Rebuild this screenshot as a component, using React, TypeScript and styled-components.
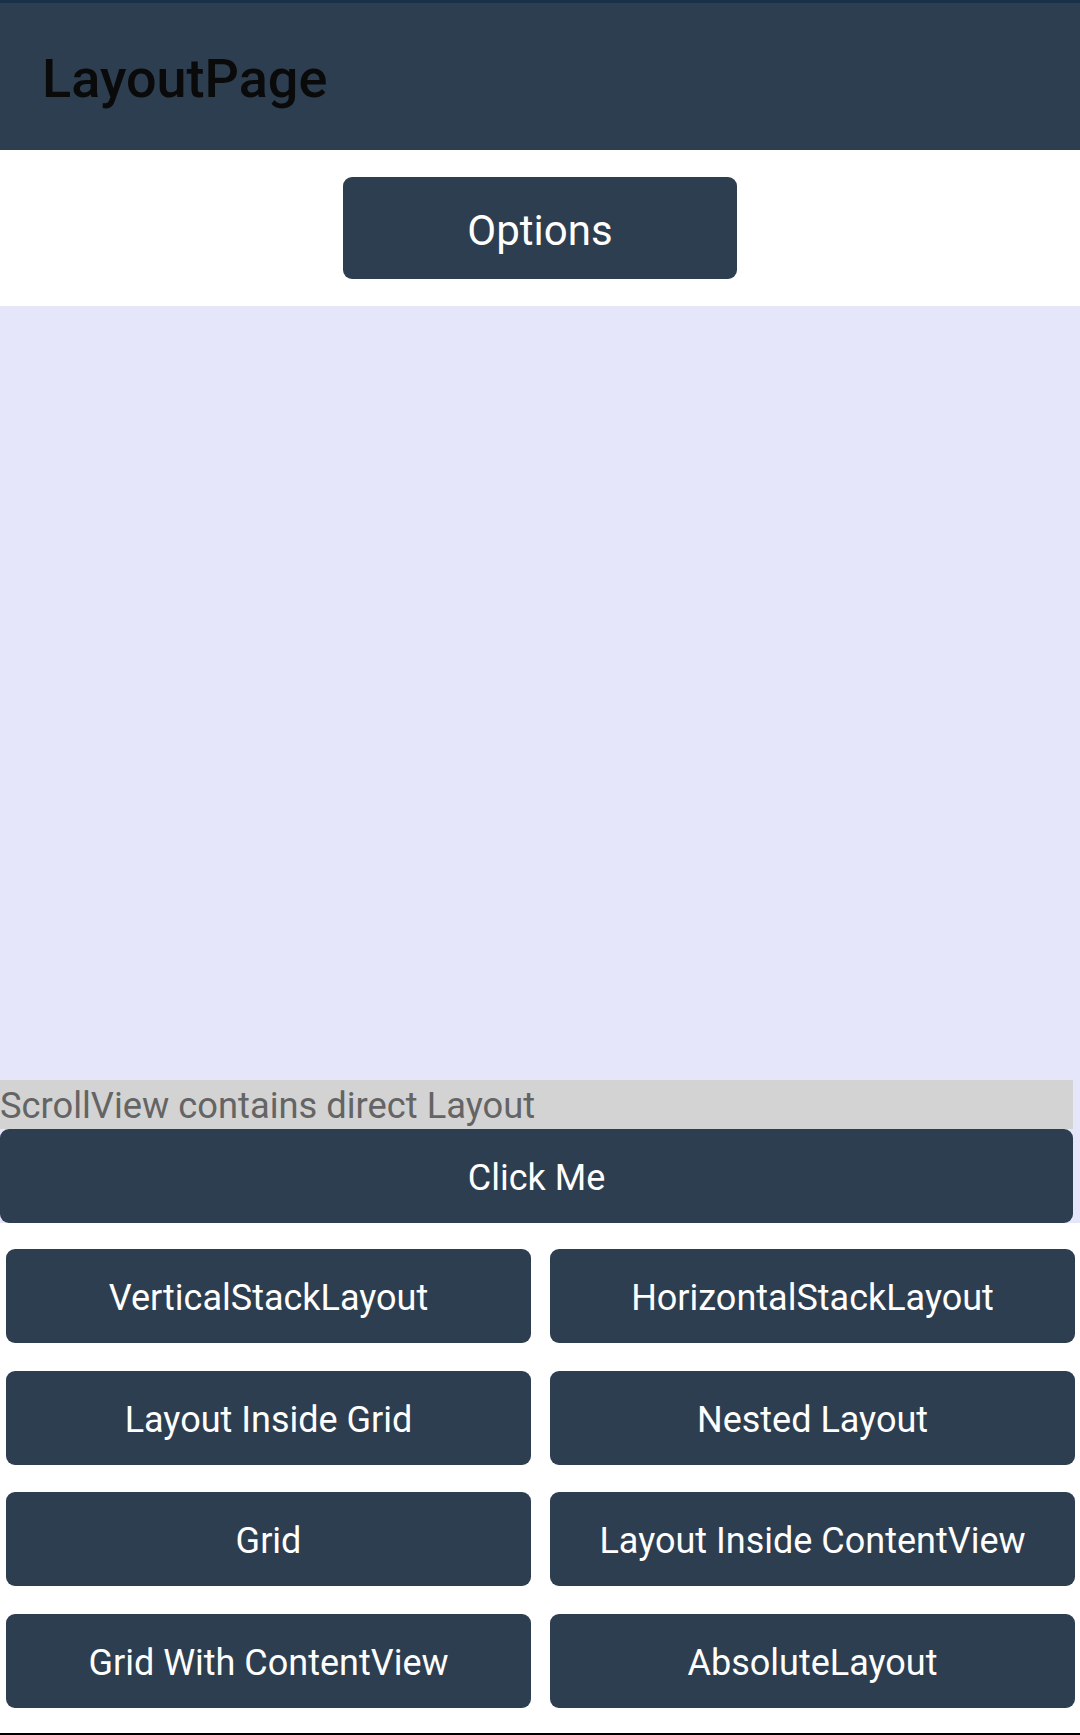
import styled, { createGlobalStyle } from "styled-components";

const GlobalStyle = createGlobalStyle`
  html, body {
    margin: 0;
    padding: 0;
    background: #ffffff;
  }
  body {
    font-family: Roboto, "Liberation Sans", sans-serif;
  }
`;

const Page = styled.div`
  width: 1080px;
  height: 1735px;
  display: flex;
  flex-direction: column;
  border-top: 3px solid #1b3049;
  border-bottom: 2px solid #000000;
  box-sizing: border-box;
  background: #ffffff;
`;

const Toolbar = styled.div`
  height: 147px;
  background: #2d3e50;
  display: flex;
  align-items: center;
  padding: 4px 0 0 42px;
  box-sizing: border-box;
`;

const Title = styled.h1`
  margin: 0;
  font-family: Roboto, sans-serif;
  font-weight: 500;
  font-size: 54px;
  color: #0a0a0a;
`;

const OptionsRow = styled.div`
  height: 156px;
  display: flex;
  justify-content: center;
  align-items: center;
`;

const Button = styled.button<{ $width?: string; $height?: number; $size?: number }>`
  width: ${(p) => p.$width || "100%"};
  height: ${(p) => p.$height || 94}px;
  border: none;
  border-radius: 9px;
  background: #2d3e50;
  color: #ffffff;
  font-family: Roboto, sans-serif;
  font-size: ${(p) => p.$size || 36}px;
  font-weight: 400;
  padding: 4px 0 0;
  cursor: pointer;
`;

const ScrollArea = styled.div`
  height: 917px;
  background: #e6e6fa;
  display: flex;
  flex-direction: column;
  justify-content: flex-end;
`;

const Inner = styled.div`
  width: 1073px;
  display: flex;
  flex-direction: column;
`;

const Label = styled.div`
  height: 49px;
  background: #d3d3d3;
  color: #646464;
  font-family: Roboto, sans-serif;
  font-size: 36.3px;
  line-height: 52px;
  white-space: nowrap;
  overflow: hidden;
`;

const ButtonGrid = styled.div`
  display: grid;
  grid-template-columns: 525px 525px;
  column-gap: 19px;
  row-gap: 27.5px;
  padding: 26px 5px 0 6px;
`;

const items = [
  "VerticalStackLayout",
  "HorizontalStackLayout",
  "Layout Inside Grid",
  "Nested Layout",
  "Grid",
  "Layout Inside ContentView",
  "Grid With ContentView",
  "AbsoluteLayout",
];

const App = () => {
  return (
    <>
      <GlobalStyle />
      <Page>
        <Toolbar>
          <Title>LayoutPage</Title>
        </Toolbar>
        <OptionsRow>
          <Button $width="394px" $height={102} $size={42}>Options</Button>
        </OptionsRow>
        <ScrollArea>
          <Inner>
            <Label>ScrollView contains direct Layout</Label>
            <Button>Click Me</Button>
          </Inner>
        </ScrollArea>
        <ButtonGrid>
          {items.map((item) => (
            <Button key={item}>{item}</Button>
          ))}
        </ButtonGrid>
      </Page>
    </>
  );
};

export default App;
